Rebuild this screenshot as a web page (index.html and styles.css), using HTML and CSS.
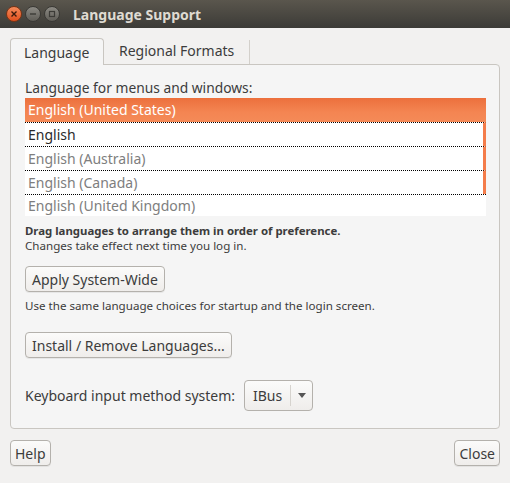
FILE: index.html
```html
<!DOCTYPE html>
<html lang="en">
<head>
    <meta charset="UTF-8">
    <meta name="viewport" content="width=device-width, initial-scale=1.0">
    <title>Language Support</title>
    <link rel="stylesheet" href="styles.css">
</head>
<body>
    <div class="window">
        <div class="titlebar">
            <div class="winButtons">
                <span class="winBtn close"><svg width="10" height="10" viewBox="0 0 10 10"><path d="M2.5 2.5 L7.5 7.5 M7.5 2.5 L2.5 7.5" stroke="#3a1a0c" stroke-width="1.4"/></svg></span>
                <span class="winBtn"><svg width="10" height="10" viewBox="0 0 10 10"><path d="M2 5 H8" stroke="#3c3b37" stroke-width="1.4"/></svg></span>
                <span class="winBtn"><svg width="10" height="10" viewBox="0 0 10 10"><rect x="2.5" y="2.5" width="5" height="5" fill="none" stroke="#3c3b37" stroke-width="1.2"/></svg></span>
            </div>
            <span class="title">Language Support</span>
        </div>

        <div class="content">
            <div class="tabs">
                <div class="tab active">Language</div>
                <div class="tab">Regional Formats</div>
            </div>

            <div class="panel">
                <p class="label">Language for menus and windows:</p>
                <ul class="langList">
                    <li class="selected">English (United States)</li>
                    <li class="enabled edge">English</li>
                    <li class="edge">English (Australia)</li>
                    <li class="edge">English (Canada)</li>
                    <li class="last">English (United Kingdom)</li>
                </ul>
                <p class="hint bold">Drag languages to arrange them in order of preference.</p>
                <p class="hint">Changes take effect next time you log in.</p>

                <button class="btn applyBtn">Apply System-Wide</button>
                <p class="small">Use the same language choices for startup and the login screen.</p>

                <button class="btn installBtn">Install / Remove Languages...</button>

                <div class="inputRow">
                    <span>Keyboard input method system:</span>
                    <div class="combo">
                        <span class="comboValue">IBus</span>
                        <span class="comboArrow"><svg width="8" height="5" viewBox="0 0 8 5"><path d="M0 0 H8 L4 5 Z" fill="#555"/></svg></span>
                    </div>
                </div>
            </div>

            <div class="footer">
                <button class="btn">Help</button>
                <button class="btn">Close</button>
            </div>
        </div>
    </div>
</body>
</html>
```

FILE: styles.css
```css
body {
    margin: 0;
    width: 510px;
    height: 483px;
    overflow: hidden;
    font-family: "Noto Sans", "Open Sans", sans-serif;
    font-size: 13.5px;
    color: #3c3c3c;
    background-color: #f2f1f0;
}

.titlebar {
    display: flex;
    align-items: center;
    height: 28px;
    background: linear-gradient(#5a564d, #3c3b37);
}

.winButtons {
    display: flex;
    gap: 3px;
    margin-left: 6px;
}

.winBtn {
    display: flex;
    align-items: center;
    justify-content: center;
    width: 16px;
    height: 16px;
    border-radius: 50%;
    background: linear-gradient(#8c8a84, #5f5d57);
    border: 1px solid #3a3935;
    box-sizing: border-box;
}

.winBtn.close {
    background: linear-gradient(#f58a5a, #e1501e);
    border-color: #7a3415;
}

.title {
    margin-left: 13px;
    color: #dfdbd2;
    font-weight: bold;
    font-size: 14px;
}

.content {
    padding: 10px 10px 0 10px;
}

.tabs {
    display: flex;
    align-items: flex-end;
    height: 26px;
}

.tab {
    box-sizing: border-box;
    height: 24px;
    padding: 0 15px;
    line-height: 22px;
    border-right: 1px solid #d3d0cb;
    font-size: 14px;
}

.tab.active {
    height: 27px;
    width: 94px;
    margin-bottom: -1px;
    padding-left: 13px;
    line-height: 27px;
    background-color: #f5f5f5;
    border: 1px solid #c9c6c1;
    border-bottom: none;
    border-radius: 4px 4px 0 0;
    position: relative;
    z-index: 1;
}

.panel {
    box-sizing: border-box;
    height: 365px;
    padding: 14px 14px 0 14px;
    background-color: #f5f5f5;
    border: 1px solid #c9c6c1;
    border-radius: 0 4px 4px 4px;
}

.label {
    margin: 0 0 1px 0;
    line-height: 18px;
    font-size: 13.8px;
}

.langList {
    list-style: none;
    margin: 0;
    padding: 0;
    width: 461px;
    background-color: #ffffff;
    font-size: 14px;
}

.langList li {
    box-sizing: border-box;
    height: 24px;
    line-height: 23px;
    padding-left: 3px;
    color: #7e7e7e;
    border-top: 1px dotted #000000;
}

.langList li.selected {
    color: #ffffff;
    border-top: none;
    background: linear-gradient(#ec703d, #f48552 60%, #f48a58);
}

.langList li.enabled {
    color: #2b2b2b;
}

.langList li.edge {
    border-right: 3px solid #f47c4a;
}

.langList li.last {
    height: 22px;
    line-height: 21px;
}

.hint {
    margin: 0;
    font-size: 11.6px;
    line-height: 15px;
}

.hint.bold {
    margin-top: 7px;
    font-weight: bold;
    font-size: 11.4px;
}

.btn {
    box-sizing: border-box;
    height: 26px;
    padding: 0 6px;
    font-family: inherit;
    font-size: 14px;
    color: #3c3c3c;
    background: linear-gradient(#fbfbfa, #efedeb);
    border: 1px solid #b4b1ac;
    border-radius: 4px;
    box-shadow: 0 1px 0 rgba(0, 0, 0, 0.06);
}

.applyBtn {
    margin-top: 13px;
}

.small {
    margin: 6px 0 0 0;
    font-size: 11.6px;
    line-height: 15px;
}

.installBtn {
    margin-top: 19px;
}

.inputRow {
    display: flex;
    align-items: center;
    gap: 9px;
    margin-top: 22px;
    font-size: 14px;
}

.combo {
    display: flex;
    align-items: center;
    box-sizing: border-box;
    height: 31px;
    width: 69px;
    background: linear-gradient(#fbfbfa, #efedeb);
    border: 1px solid #b4b1ac;
    border-radius: 4px;
}

.comboValue {
    width: 45px;
    text-align: center;
    border-right: 1px solid #d6d3ce;
    line-height: 21px;
}

.comboArrow {
    display: flex;
    flex: 1;
    justify-content: center;
}

.footer {
    display: flex;
    justify-content: space-between;
    margin-top: 11px;
}

.footer .btn {
    padding: 0 4px;
}
```
